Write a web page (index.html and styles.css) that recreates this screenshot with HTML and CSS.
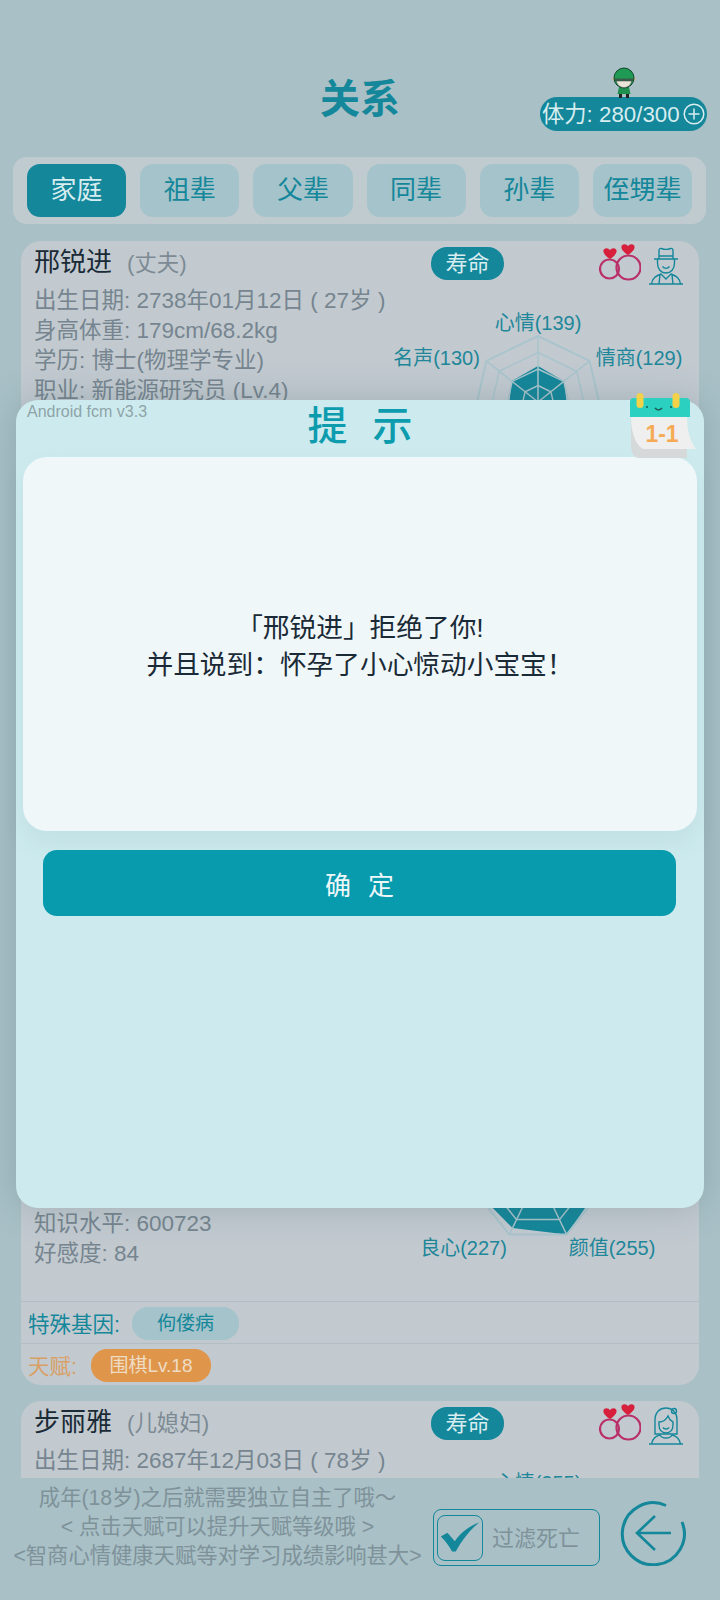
FILE: index.html
```html
<!DOCTYPE html>
<html lang="zh">
<head>
    <meta charset="UTF-8">
    <title>关系</title>
    <link rel="stylesheet" href="styles.css">
</head>
<body>
    <svg class="defs" width="0" height="0">
        <defs>
            <g id="grid" fill="none" stroke="#a9c4cc">
                <polygon stroke-width="2" points="149,50 200.6,74.9 213.4,130.7 177.6,175.5 120.4,175.5 84.6,130.7 97.4,74.9"/>
                <polygon stroke-width="1.5" points="149,66.5 187.7,85.2 197.3,127 170.5,160.6 127.5,160.6 100.7,127 110.3,85.2"/>
                <polygon stroke-width="1.5" points="149,83 174.8,95.4 181.2,123.4 163.3,145.7 134.7,145.7 116.8,123.4 123.2,95.4"/>
                <polygon stroke-width="1.5" points="149,99.5 161.9,105.7 165.1,119.7 156.2,130.9 141.8,130.9 132.9,119.7 136.1,105.7"/>
                <path stroke-width="1.5" d="M149 116V50M149 116L200.6 74.9M149 116L213.4 130.7M149 116L177.6 175.5M149 116L120.4 175.5M149 116L84.6 130.7M149 116L97.4 74.9"/>
            </g>
            <g id="rings">
                <circle cx="10.500" cy="25" r="9.500" fill="none" stroke="#b92f68" stroke-width="2.200"/>
                <circle cx="29.500" cy="23.500" r="12" fill="none" stroke="#b92f68" stroke-width="2.200"/>
                <path fill="#d6203c" d="M11 15C3 10 3 5 7 4.200C8.800 4 10.300 5 11 6.200C11.700 5 13.200 4 15 4.200C19 5 19 10 11 15Z"/>
                <path fill="#d6203c" d="M29 11C21 6 21 1 25 .2C26.800 0 28.300 1 29 2.200C29.700 1 31.200 0 33 .2C37 1 37 6 29 11Z"/>
            </g>
        </defs>
    </svg>

    <div class="page">
        <header class="top">
            <span></span>
            <h1 class="title">关系</h1>
            <div class="stamina">
                <svg class="hero" viewBox="0 0 24 31">
                    <path fill="#222" d="M7 26h3v5H7zM14 26h3v5h-3z"/>
                    <path fill="#1f8f4e" d="M7 20h10l1.500 7h-13z"/>
                    <circle cx="1.800" cy="12" r="1.800" fill="#c9b896"/>
                    <circle cx="22.200" cy="12" r="1.800" fill="#c9b896"/>
                    <circle cx="12" cy="11" r="10" fill="#1f9a55" stroke="#14452e"/>
                    <path fill="#e8e4d8" stroke="#444" stroke-width=".5" d="M4.500 14h15c-.5 4-3.500 6.500-7.500 6.500S5 18 4.500 14z"/>
                    <path fill="#3a5a48" d="M3 11.500h18V14H3z"/>
                </svg>
                <span class="stamina-text">体力: 280/300</span>
                <svg class="plus" viewBox="0 0 22 22" fill="none" stroke="#d8edf0" stroke-width="1.500">
                    <circle cx="11" cy="11" r="9.800"/>
                    <path d="M11 5.500v11M5.500 11h11"/>
                </svg>
            </div>
        </header>

        <nav class="tabs">
            <div class="tab active">家庭</div>
            <div class="tab">祖辈</div>
            <div class="tab">父辈</div>
            <div class="tab">同辈</div>
            <div class="tab">孙辈</div>
            <div class="tab">侄甥辈</div>
        </nav>

        <main class="list">
            <!-- husband -->
            <section class="card">
                <div class="card-head">
                    <div class="who"><span class="name">邢锐进</span><span class="rel">(丈夫)</span></div>
                    <div class="life">寿命</div>
                    <div class="marks">
                        <svg class="ring-icon" viewBox="0 0 42 37"><use href="#rings"/></svg>
                        <svg class="person" viewBox="0 0 34 38" fill="none" stroke="#14879a" stroke-width="1.400">
                            <path d="M10 12V3.500C10 2 11 1 12.500 1.500C15 2.500 19 2.500 21.500 1.500C23 1 24 2 24 3.500V12"/>
                            <path d="M5 12h24M10 9h14"/>
                            <path d="M8.500 12v4c0 6 3.500 10 8.500 10s8.500-4 8.500-10v-4"/>
                            <path d="M13.500 19.500c2 2.500 5 2.500 7 0"/>
                            <path d="M0 37h34M2.500 37c1-6 4-8 9.500-10l5 5 5-5c5.500 2 8.500 4 9.500 10M11 28l-1 9M23 28l1 9"/>
                        </svg>
                    </div>
                </div>
                <div class="card-body">
                    <div class="info">
                        <div>出生日期: 2738年01月12日 ( 27岁 )</div>
                        <div>身高体重: 179cm/68.2kg</div>
                        <div>学历: 博士(物理学专业)</div>
                        <div>职业: 新能源研究员 (Lv.4)</div>
                    </div>
                    <svg class="radar" viewBox="0 0 310 200">
                        <polygon fill="#14879a" points="149,80 175.100,95.200 178.300,122.700 166.400,152 131.600,152 119.700,122.700 122.700,95.100"/>
                        <use href="#grid"/>
                        <text x="149" y="44">心情(139)</text>
                        <text x="250" y="79">情商(129)</text>
                        <text x="47.500" y="79">名声(130)</text>
                    </svg>
                </div>
            </section>

            <section class="card"></section>

            <section class="card">
                <div class="card-head"></div>
                <div class="card-body">
                    <div class="info info-tail">
                        <div>知识水平: 600723</div>
                        <div>好感度: 84</div>
                    </div>
                    <svg class="radar" viewBox="0 0 310 200">
                        <polygon fill="#14879a" points="149,66 188,84.900 209.500,129.800 177.600,175.500 123.500,169 85.600,130.500 109.900,84.900"/>
                        <use href="#grid"/>
                        <text x="74.500" y="196">良心(227)</text>
                        <text x="223" y="196">颜值(255)</text>
                    </svg>
                </div>
                <div class="trait">
                    <span class="trait-label">特殊基因:</span>
                    <span class="chip">佝偻病</span>
                </div>
                <div class="trait talent">
                    <span class="trait-label">天赋:</span>
                    <span class="chip">围棋Lv.18</span>
                </div>
            </section>

            <!-- daughter in law -->
            <section class="card">
                <div class="card-head">
                    <div class="who"><span class="name">步丽雅</span><span class="rel">(儿媳妇)</span></div>
                    <div class="life">寿命</div>
                    <div class="marks">
                        <svg class="ring-icon" viewBox="0 0 42 37"><use href="#rings"/></svg>
                        <svg class="person" viewBox="0 0 34 38" fill="none" stroke="#14879a" stroke-width="1.400">
                            <path d="M6 27V13C6 5 11 1 17 1s11 4 11 12v14z"/>
                            <path d="M10 15c3 0 7-2 9-6 1 3 3 5 5 6v3c0 5-3 8-7 8s-7-3-7-8z"/>
                            <circle cx="25" cy="4" r="2.500"/>
                            <path d="M14 20.500c1.500 2 4.500 2 6 0"/>
                            <path d="M0 37h34M2.500 37c1-5 3.500-8 8.500-9 2 4 10 4 12 0 5 1 7.500 4 8.500 9"/>
                        </svg>
                    </div>
                </div>
                <div class="card-body">
                    <div class="info">
                        <div>出生日期: 2687年12月03日 ( 78岁 )</div>
                    </div>
                    <svg class="radar" viewBox="0 0 310 200">
                        <use href="#grid"/>
                        <text x="149" y="44">心情(255)</text>
                    </svg>
                </div>
            </section>
        </main>

        <footer class="bottom">
            <div class="tips">
                <div>成年(18岁)之后就需要独立自主了哦～</div>
                <div>&lt; 点击天赋可以提升天赋等级哦 &gt;</div>
                <div>&lt;智商心情健康天赋等对学习成绩影响甚大&gt;</div>
            </div>
            <div class="filter">
                <div class="check">
                    <svg viewBox="0 0 46 46"><path fill="#14879a" d="M3 22l7-4 8 9C24 18 33 11 44 7C33 16 25 27 19 38h-4C12 32 8 27 3 22Z"/></svg>
                </div>
                <span class="filter-text">过滤死亡</span>
            </div>
            <svg class="back" viewBox="0 0 66 66" fill="none" stroke="#14879a" stroke-width="3">
                <path d="M46 5.500A31 31 0 1 0 62 22"/>
                <path stroke-width="2.600" d="M17 33h34M35 16L17 33l18 17"/>
            </svg>
        </footer>
    </div>

    <!-- dialog -->
    <div class="dialog">
        <div class="version">Android fcm v3.3</div>
        <svg class="calendar" viewBox="0 0 68 66">
            <path fill="#d6d9da" d="M2 24h56v41H10C5 65 2 60 2 52z"/>
            <path fill="#efeff0" d="M2 24h56c0 14 3 24 9 32H14C6 52 2 38 2 24z"/>
            <path fill="#2bd0c0" d="M5 5h52c3 0 4 2 4 4v15H1V9c0-2 1-4 4-4z"/>
            <rect x="7.500" y="0" width="7" height="15" rx="3.500" fill="#f3d24a"/>
            <rect x="43.500" y="0" width="7" height="15" rx="3.500" fill="#f3d24a"/>
            <path fill="none" stroke="#1a5a55" stroke-width="1.500" d="M26 15c2 2.500 5 2.500 7 0M18 13v2M42 13v2"/>
            <text x="33" y="49">1-1</text>
        </svg>
        <h2 class="dialog-title">提 示</h2>
        <div class="dialog-box">
            <p>「邢锐进」拒绝了你!</p>
            <p>并且说到：怀孕了小心惊动小宝宝！</p>
        </div>
        <button class="ok">确 定</button>
    </div>
</body>
</html>
```

FILE: styles.css
```css
* {
    box-sizing: border-box;
}
body {
    margin: 0;
    font-family: "Liberation Sans", "Noto Sans CJK SC", sans-serif;
    background-color: #a8c0c6;
}
.defs {
    position: absolute;
}
.page {
    height: 1600px;
    display: flex;
    flex-direction: column;
    overflow: hidden;
}

/* header */
.top {
    display: grid;
    grid-template-columns: 1fr auto 1fr;
    height: 157px;
    padding: 78px 13px 0;
}
.title {
    margin: 0;
    font-size: 40px;
    line-height: 42px;
    color: #14879a;
}
.stamina {
    position: relative;
    justify-self: end;
    display: flex;
    align-items: center;
    gap: 3px;
    width: 167px;
    height: 34px;
    margin-top: 19px;
    padding-left: 2px;
    border-radius: 17px;
    background-color: #14879a;
    color: #d8edf0;
    font-size: 22.3px;
    white-space: nowrap;
}
.stamina-text {
    padding-bottom: 4px;
}
.hero {
    position: absolute;
    left: 72px;
    top: -30px;
    width: 24px;
    height: 31px;
}
.plus {
    width: 22px;
    height: 22px;
    flex: none;
}

/* tabs */
.tabs {
    display: flex;
    gap: 14px;
    height: 67px;
    margin: 0 14px 0 13px;
    padding: 7px 14px;
    border-radius: 14px;
    background-color: #c0cbd0;
}
.tab {
    flex: 1;
    border-radius: 13px;
    background-color: #a5c3cb;
    color: #14879a;
    font-size: 26px;
    line-height: 53px;
    text-align: center;
    white-space: nowrap;
}
.tab.active {
    background-color: #14879a;
    color: #d8edf0;
}

/* cards */
.list {
    flex: 1;
    display: flex;
    flex-direction: column;
    gap: 16px;
    margin-top: 17px;
    padding: 0 21px;
    overflow: hidden;
    min-height: 0;
}
.card {
    flex: none;
    display: flex;
    flex-direction: column;
    height: 370.7px;
    border-radius: 20px;
    background-color: #c2cad0;
    overflow: hidden;
}
.card-head {
    flex: none;
    display: flex;
    align-items: center;
    height: 45px;
    padding: 0 16px 0 13px;
}
.who {
    width: 397px;
    margin-bottom: 9px;
    white-space: nowrap;
}
.name {
    font-size: 26px;
    color: #1a2a36;
}
.rel {
    margin-left: 15px;
    font-size: 22.4px;
    color: #7d8a94;
}
.life {
    width: 73px;
    height: 33px;
    border-radius: 16px;
    background-color: #14879a;
    color: #d8edf0;
    font-size: 22px;
    line-height: 33px;
    text-align: center;
}
.marks {
    display: flex;
    align-items: center;
    gap: 8px;
    margin-left: auto;
}
.ring-icon {
    width: 42px;
    height: 37px;
    margin-bottom: 2px;
}
.person {
    width: 34px;
    height: 38px;
    margin-top: 5px;
}
.card-body {
    flex: 1;
    display: flex;
    justify-content: space-between;
    min-height: 0;
}
.info {
    padding-left: 13px;
    color: #76858f;
    font-size: 22.5px;
    line-height: 30px;
    white-space: nowrap;
}
.info-tail {
    padding-top: 150px;
}
.radar {
    flex: none;
    width: 310px;
    height: 200px;
}
.radar text {
    fill: #1f8799;
    font-size: 20px;
    text-anchor: middle;
}
.trait {
    flex: none;
    display: flex;
    align-items: flex-start;
    gap: 12px;
    height: 42px;
    padding: 5px 0 0 7px;
    border-top: 1px solid #b3bec4;
    font-size: 21.5px;
    line-height: 36px;
    color: #14879a;
}
.chip {
    width: 107px;
    height: 33px;
    border-radius: 16px;
    background-color: #a5c3cb;
    font-size: 19px;
    line-height: 33px;
    text-align: center;
}
.talent {
    gap: 14px;
    color: #d9a066;
}
.talent .chip {
    width: 120px;
    background-color: #e0964a;
    color: #efdcc5;
}

/* footer */
.bottom {
    flex: none;
    display: flex;
    height: 122px;
    background-color: #a8c0c6;
}
.tips {
    flex: none;
    width: 433px;
    padding: 6px 0 0 2px;
    color: #7f929a;
    font-size: 21.3px;
    line-height: 29px;
    text-align: center;
    white-space: nowrap;
}
.filter {
    flex: none;
    display: flex;
    align-items: center;
    gap: 9px;
    width: 167px;
    height: 57px;
    margin-top: 31px;
    padding-left: 3px;
    border: 1.5px solid #14879a;
    border-radius: 8px;
    color: #7f929a;
    font-size: 22px;
}
.filter-text {
    padding-bottom: 4px;
}
.check {
    width: 46px;
    height: 46px;
    border: 1.5px solid #14879a;
    border-radius: 8px;
}
.check svg {
    display: block;
    width: 43px;
    height: 43px;
}
.back {
    flex: none;
    width: 66px;
    height: 66px;
    margin: 22px 0 0 20px;
}

/* dialog, sits over everything */
.dialog {
    position: absolute;
    left: 16px;
    top: 400px;
    width: 688px;
    height: 808px;
    padding: 0 7px;
    border-radius: 22px;
    background-color: #cdebee;
    box-shadow: 0 0 36px rgba(60, 90, 100, 0.25);
}
.version {
    position: absolute;
    left: 11px;
    top: 3px;
    color: #8ea3a8;
    font-size: 16px;
}
.calendar {
    position: absolute;
    right: 7px;
    top: -7px;
    width: 68px;
    height: 66px;
}
.calendar text {
    fill: #f5ab55;
    font-size: 23px;
    font-weight: bold;
    text-anchor: middle;
}
.dialog-title {
    margin: 0;
    height: 57px;
    color: #0d9cae;
    font-size: 40px;
    font-weight: 500;
    line-height: 52px;
    letter-spacing: 7px;
    text-indent: 7px;
    text-align: center;
}
.dialog-box {
    display: flex;
    flex-direction: column;
    justify-content: center;
    height: 374px;
    padding-top: 6px;
    border-radius: 24px;
    background-color: #eff7f9;
    box-shadow: 0 12px 24px rgba(60, 100, 110, 0.08);
    color: #1a2a36;
    font-size: 26.7px;
    line-height: 37px;
    text-align: center;
}
.dialog-box p {
    margin: 0;
}
.ok {
    display: block;
    width: 633px;
    height: 66px;
    margin: 19px 0 0 20px;
    border: 0;
    border-radius: 14px;
    background-color: #089aad;
    color: #eef8f9;
    font-family: inherit;
    font-size: 26px;
    letter-spacing: 5px;
    text-indent: 5px;
}
```
